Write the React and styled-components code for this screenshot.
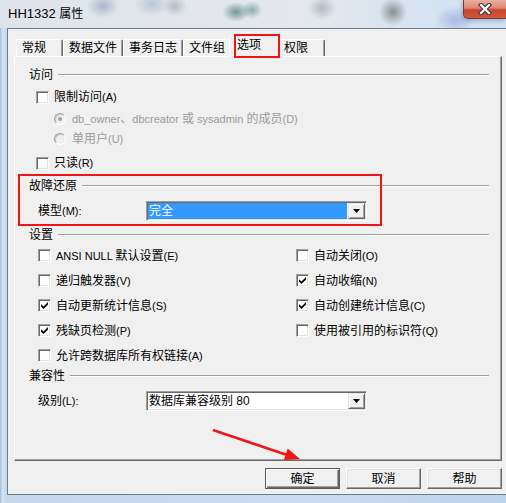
import React from "react";
import styled, { createGlobalStyle } from "styled-components";

const Global = createGlobalStyle`
  html, body { margin: 0; padding: 0; background: #f0f0f0; }
  body {
    font-family: "Liberation Sans", "Noto Sans CJK SC", sans-serif;
    font-size: 12px;
    color: #000;
  }
  * { box-sizing: border-box; }
`;

const Lat = styled.span`
  font-family: "Liberation Sans", Arial, sans-serif;
  font-size: ${(p) => p.$size || 11}px;
`;

const txt = (s, size) =>
  s
    .split(/([\x00-\x7F]+)/)
    .filter(Boolean)
    .map((part, i) =>
      /^[\x00-\x7F]+$/.test(part) ? (
        <Lat key={i} $size={size}>
          {part}
        </Lat>
      ) : (
        <React.Fragment key={i}>{part}</React.Fragment>
      )
    );

const Window = styled.div`
  width: 506px;
  height: 503px;
  overflow: hidden;
  display: flex;
  flex-direction: column;
  background: linear-gradient(90deg, #9fb3ca 0px, #d3e3f4 2px, #c3d7ed 7px, #c9dcf1 60%, #bcd3ec 100%);
`;

const TitleBar = styled.div`
  height: 28px;
  flex: none;
  display: flex;
  align-items: flex-start;
  background:
    radial-gradient(ellipse 16px 12px at 103px 6px, rgba(120, 145, 175, 0.55), transparent),
    radial-gradient(ellipse 18px 12px at 152px 4px, rgba(140, 160, 185, 0.45), transparent),
    radial-gradient(ellipse 12px 10px at 175px 6px, rgba(130, 135, 145, 0.45), transparent),
    radial-gradient(ellipse 14px 10px at 236px 12px, rgba(40, 95, 100, 0.6), transparent),
    radial-gradient(ellipse 10px 9px at 252px 10px, rgba(60, 110, 110, 0.5), transparent),
    radial-gradient(ellipse 14px 12px at 322px 8px, rgba(120, 130, 140, 0.45), transparent),
    radial-gradient(ellipse 14px 14px at 393px 12px, rgba(60, 75, 65, 0.55), transparent),
    radial-gradient(ellipse 20px 14px at 455px 20px, rgba(90, 110, 200, 0.35), transparent),
    linear-gradient(90deg, #dfe4ea 0%, #e4e8ec 60%, #d6e3f1 85%, #cfe0f2 100%);
`;

const TitleText = styled.div`
  align-self: center;
  padding-left: 8px;
  font-size: 12px;
  line-height: 16px;
  color: #000;
`;

const CloseButton = styled.div`
  margin-left: auto;
  width: 43px;
  height: 19px;
  flex: none;
  display: flex;
  align-items: center;
  justify-content: center;
  border: 1px solid #7a3a30;
  border-top: none;
  border-right: none;
  border-radius: 0 0 0 5px;
  background: linear-gradient(180deg, #eab0a2 0%, #de8672 45%, #c8442d 55%, #d2583c 100%);
  box-shadow: -1px 2px 4px rgba(60, 80, 170, 0.35);
`;

const Client = styled.div`
  flex: 1;
  margin: 0 0 8px 7px;
  border: 1px solid #6d7b8d;
  border-right: none;
  background: #f0f0f0;
  padding: 6px 4px 5px 6px;
  display: flex;
  flex-direction: column;
`;

const TabStrip = styled.div`
  height: 21px;
  flex: none;
  display: flex;
  align-items: flex-end;
  padding-left: 2px;
  position: relative;
  z-index: 1;
`;

const Tab = styled.div`
  position: relative;
  flex: none;
  display: flex;
  align-items: center;
  height: ${(p) => (p.$active ? 22 : 17)}px;
  min-width: ${(p) => (p.$active ? 51 : 47)}px;
  margin: ${(p) => (p.$active ? "0 -2px -1px -2px" : "0")};
  padding: ${(p) => (p.$active ? "0 7px 4px 7px" : "0 5px")};
  z-index: ${(p) => (p.$active ? 2 : 1)};
  background: #f0f0f0;
  border-top: 1px solid #fff;
  border-left: 1px solid #fff;
  border-right: 1px solid #696969;
  border-radius: 2px 2px 0 0;
  box-shadow: inset -1px 0 0 #a0a0a0;
  font-size: 12px;
  line-height: 14px;
  white-space: nowrap;
`;

const TabMark = styled.div`
  position: absolute;
  left: 4px;
  top: -2px;
  width: 46px;
  height: 24px;
  border: 2px solid #f01414;
`;

const Panel = styled.div`
  position: relative;
  height: 405px;
  flex: none;
  background: #f0f0f0;
  border: 1px solid;
  border-color: #fff #696969 #696969 #fff;
  box-shadow: inset -1px -1px 0 #a0a0a0;
  padding: 10px 12px 0 14px;
  display: flex;
  flex-direction: column;
`;

const GroupHeader = styled.div`
  display: flex;
  align-items: center;
  gap: 5px;
  height: 16px;
  line-height: 16px;
  flex: none;
  margin-top: ${(p) => p.$mt || 0}px;
  &::after {
    content: "";
    flex: 1;
    border-top: 1px solid #a0a0a0;
    border-bottom: 1px solid #fff;
  }
`;

const Row = styled.div`
  display: flex;
  align-items: center;
  flex: none;
  height: ${(p) => p.$h || 20}px;
  margin-top: ${(p) => p.$mt || 0}px;
  padding-left: ${(p) => p.$indent || 0}px;
  gap: ${(p) => (p.$gap === undefined ? 5 : p.$gap)}px;
  line-height: 14px;
  white-space: nowrap;
`;

const Label = styled.span`
  color: ${(p) => (p.$disabled ? "#9a9a9a" : "inherit")};
  width: ${(p) => (p.$w ? `${p.$w}px` : "auto")};
  flex: none;
  white-space: pre;
`;

const Box = styled.span`
  width: 13px;
  height: 13px;
  flex: none;
  display: inline-flex;
  align-items: center;
  justify-content: center;
  background: #fff;
  border: 1px solid;
  border-color: #a0a0a0 #fff #fff #a0a0a0;
  box-shadow: inset 1px 1px 0 #696969, inset -1px -1px 0 #e3e3e3;
`;

const RadioDot = styled.span`
  width: 12px;
  height: 12px;
  flex: none;
  border-radius: 50%;
  border: 1px solid;
  border-color: #a0a0a0 #fff #fff #a0a0a0;
  box-shadow: inset 1px 1px 0 #c8c8c8;
  background: #f0f0f0;
  display: inline-flex;
  align-items: center;
  justify-content: center;
  &::after {
    content: "";
    width: 4px;
    height: 4px;
    border-radius: 50%;
    background: ${(p) => (p.$checked ? "#a0a0a0" : "transparent")};
  }
`;

const SettingsGrid = styled.div`
  display: grid;
  grid-template-columns: 258px 1fr;
  grid-auto-rows: 25px;
  padding-left: 9px;
  flex: none;
`;

const Combo = styled.div`
  width: 221px;
  height: 20px;
  flex: none;
  display: flex;
  padding: 1px;
  background: #fff;
  border: 1px solid;
  border-color: #a0a0a0 #fff #fff #a0a0a0;
  box-shadow: inset 1px 1px 0 #696969, inset -1px -1px 0 #e3e3e3;
`;

const ComboField = styled.div`
  flex: 1;
  display: flex;
  align-items: center;
  padding-left: 1px;
  margin-right: 1px;
  background: ${(p) => (p.$selected ? "#3399ff" : "transparent")};
  color: ${(p) => (p.$selected ? "#fff" : "#000")};
  line-height: 14px;
`;

const DropButton = styled.div`
  width: 17px;
  height: 16px;
  flex: none;
  display: flex;
  align-items: center;
  justify-content: center;
  background: #f0f0f0;
  border: 1px solid;
  border-color: #e3e3e3 #696969 #696969 #e3e3e3;
  box-shadow: inset 1px 1px 0 #fff, inset -1px -1px 0 #a0a0a0;
`;

const RedFrame = styled.div`
  position: absolute;
  left: 3px;
  top: 117px;
  width: 364px;
  height: 52px;
  border: 2px solid #f01414;
  pointer-events: none;
`;

const ArrowSvg = styled.svg`
  position: absolute;
  left: 190px;
  top: 360px;
  overflow: visible;
`;

const ButtonRow = styled.div`
  display: flex;
  justify-content: flex-end;
  gap: 6px;
  margin-top: 7px;
  flex: none;
`;

const Button = styled.div`
  width: 75px;
  height: 21px;
  display: flex;
  align-items: center;
  justify-content: center;
  background: #f0f0f0;
  font-size: 12px;
  line-height: 14px;
  border: 1px solid;
  border-color: ${(p) => (p.$default ? "#5a5a5a" : "#fff #696969 #696969 #fff")};
  box-shadow: ${(p) =>
    p.$default
      ? "inset 1px 1px 0 #fff, inset -1px -1px 0 #696969, inset -2px -2px 0 #a0a0a0"
      : "inset -1px -1px 0 #a0a0a0, inset 1px 1px 0 #e3e3e3"};
`;

const Check = () => (
  <svg width="7" height="7" viewBox="0 0 7 7">
    <polygon points="0,2.2 2.5,4.6 7,0 7,2.6 2.5,7 0,4.6" fill="#000" />
  </svg>
);

const CheckOption = ({ label, checked }) => (
  <Row $h={25}>
    <Box>{checked && <Check />}</Box>
    <Label>{txt(label)}</Label>
  </Row>
);

const Triangle = () => (
  <svg width="7" height="4" viewBox="0 0 7 4">
    <polygon points="0,0 7,0 3.5,4" fill="#000" />
  </svg>
);

const settings = [
  ["ANSI NULL 默认设置(E)", false],
  ["自动关闭(O)", false],
  ["递归触发器(V)", false],
  ["自动收缩(N)", true],
  ["自动更新统计信息(S)", true],
  ["自动创建统计信息(C)", true],
  ["残缺页检测(P)", true],
  ["使用被引用的标识符(Q)", false],
  ["允许跨数据库所有权链接(A)", false],
];

const tabs = ["常规", "数据文件", "事务日志", "文件组", "选项", "权限"];

export default function App() {
  return (
    <>
      <Global />
      <Window>
        <TitleBar>
          <TitleText>{txt("HH1332 属性", 13)}</TitleText>
          <CloseButton>
            <svg width="14" height="12" viewBox="0 0 14 12">
              <path d="M3 2 L11 10 M11 2 L3 10" stroke="#3a3a3a" strokeWidth="4.4" strokeLinecap="square" />
              <path d="M3 2 L11 10 M11 2 L3 10" stroke="#fff" strokeWidth="2.2" strokeLinecap="square" />
            </svg>
          </CloseButton>
        </TitleBar>
        <Client>
          <TabStrip>
            {tabs.map((t) => (
              <Tab key={t} $active={t === "选项"}>
                {t}
                {t === "选项" && <TabMark />}
              </Tab>
            ))}
          </TabStrip>
          <Panel>
            <GroupHeader>访问</GroupHeader>
            <Row $mt={4} $indent={7}>
              <Box />
              <Label>{txt("限制访问(A)")}</Label>
            </Row>
            <Row $mt={2} $indent={25} $gap={6}>
              <RadioDot $checked />
              <Label $disabled>{txt("db_owner、dbcreator 或 sysadmin 的成员(D)")}</Label>
            </Row>
            <Row $indent={25} $gap={6}>
              <RadioDot />
              <Label $disabled>{txt("单用户(U)")}</Label>
            </Row>
            <Row $mt={4} $indent={7}>
              <Box />
              <Label>{txt("只读(R)")}</Label>
            </Row>

            <GroupHeader $mt={5}>故障还原</GroupHeader>
            <Row $mt={7} $indent={9} $gap={0}>
              <Label $w={108}>{txt("模型(M):")}</Label>
              <Combo>
                <ComboField $selected>
                  <Label>完全</Label>
                </ComboField>
                <DropButton>
                  <Triangle />
                </DropButton>
              </Combo>
            </Row>

            <GroupHeader $mt={6}>设置</GroupHeader>
            <SettingsGrid>
              {settings.map(([label, checked]) => (
                <CheckOption key={label} label={label} checked={checked} />
              ))}
            </SettingsGrid>

            <GroupHeader>兼容性</GroupHeader>
            <Row $mt={7} $indent={9} $gap={0}>
              <Label $w={108}>{txt("级别(L):")}</Label>
              <Combo>
                <ComboField>
                  <Label>{txt("数据库兼容级别 80", 12)}</Label>
                </ComboField>
                <DropButton>
                  <Triangle />
                </DropButton>
              </Combo>
            </Row>

            <RedFrame />
            <ArrowSvg width="110" height="50" viewBox="0 0 110 50">
              <line x1="8" y1="13" x2="82" y2="38" stroke="#f01414" strokeWidth="2.4" />
              <polygon points="95,42 82.7,31.5 78.9,42.9" fill="#f01414" />
            </ArrowSvg>
          </Panel>
          <ButtonRow>
            <Button $default>确定</Button>
            <Button>取消</Button>
            <Button>帮助</Button>
          </ButtonRow>
        </Client>
      </Window>
    </>
  );
}
